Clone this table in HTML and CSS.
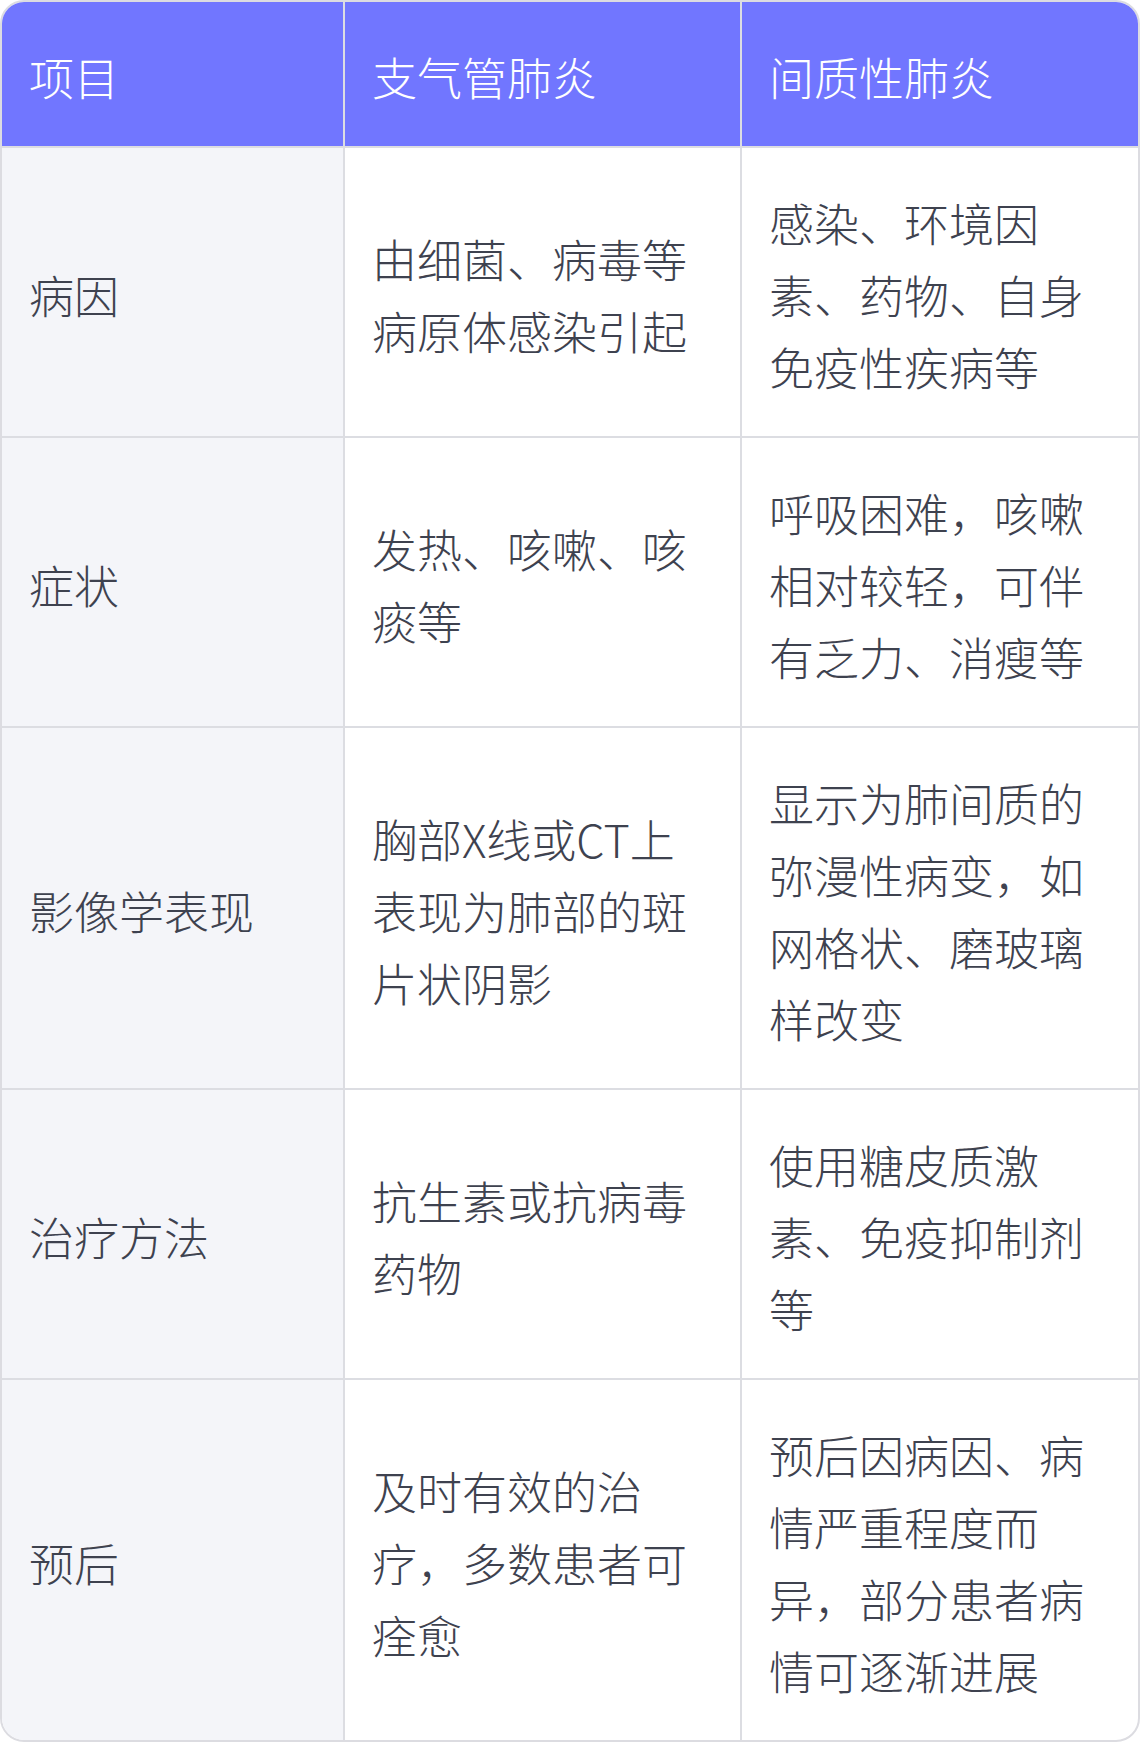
FILE: index.html
```html
<!DOCTYPE html>
<html lang="zh-CN">
<head>
<meta charset="utf-8">
<link rel="stylesheet" href="styles.css">
</head>
<body>
<div class="table">
  <div class="cell head">项目</div>
  <div class="cell head">支气管肺炎</div>
  <div class="cell head last">间质性肺炎</div>

  <div class="cell first">病因</div>
  <div class="cell">由细菌、病毒等病原体感染引起</div>
  <div class="cell last">感染、环境因素、药物、自身免疫性疾病等</div>

  <div class="cell first">症状</div>
  <div class="cell">发热、咳嗽、咳痰等</div>
  <div class="cell last">呼吸困难，咳嗽相对较轻，可伴有乏力、消瘦等</div>

  <div class="cell first">影像学表现</div>
  <div class="cell">胸部X线或CT上表现为肺部的斑片状阴影</div>
  <div class="cell last">显示为肺间质的弥漫性病变，如网格状、磨玻璃样改变</div>

  <div class="cell first">治疗方法</div>
  <div class="cell">抗生素或抗病毒药物</div>
  <div class="cell last">使用糖皮质激素、免疫抑制剂等</div>

  <div class="cell first bottom">预后</div>
  <div class="cell bottom">及时有效的治疗，多数患者可痊愈</div>
  <div class="cell last bottom">预后因病因、病情严重程度而异，部分患者病情可逐渐进展</div>
</div>
</body>
</html>
```

FILE: styles.css
```css
html, body {
  margin: 0;
  padding: 0;
  background: #ffffff;
}

.table {
  width: 1140px;
  box-sizing: border-box;
  border: 2px solid #dcdce1;
  border-radius: 24px;
  overflow: hidden;
  display: grid;
  grid-template-columns: 343px 397px 396px;
  font-family: "Noto Sans CJK SC", "Noto Sans", sans-serif;
  font-weight: 300;
  font-size: 45px;
  line-height: 72px;
  color: #3e424f;
  background: #ffffff;
}

.cell {
  display: flex;
  align-items: center;
  padding: 39px 26px 33px 27px;
  border-right: 2px solid #dcdde2;
  border-bottom: 2px solid #dcdde2;
  word-break: break-all;
}

.cell.last {
  border-right: none;
}

.cell.bottom {
  border-bottom: none;
}

.head {
  background: #7176ff;
  color: #ffffff;
}

.first {
  background: #f4f5f9;
}
```
